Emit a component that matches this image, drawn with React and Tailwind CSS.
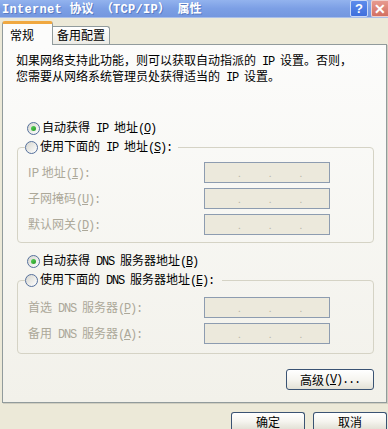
import React from "react";

// SimSun-style half-width latin: 6px per char at 12px
function Lat({ children }) {
    return <span className="font-['Liberation_Mono',monospace] tracking-[-1.2px]">{children}</span>;
}

function Key({ k, colon }) {
    return (
        <Lat>
            (<span className="underline underline-offset-1">{k}</span>){colon ? ":" : ""}
        </Lat>
    );
}

function Radio({ checked }) {
    return (
        <span className="flex h-[13px] w-[13px] shrink-0 items-center justify-center rounded-full border border-[#55709c] bg-gradient-to-br from-[#d6d6cf] to-white">
            {checked && <span className="h-[5px] w-[5px] rounded-full bg-gradient-to-br from-[#5bd15b] to-[#1f9a1f]" />}
        </span>
    );
}

function IpBox() {
    return (
        <div className="flex h-[21px] w-[126px] items-end border border-[#8d9cb0] bg-[#ece9dc] pb-[4px] text-[10px] leading-none text-[#b8b5a8]">
            <span className="ml-[33px]">.</span>
            <span className="ml-[28px]">.</span>
            <span className="ml-[28px]">.</span>
        </div>
    );
}

function Row({ label }) {
    return (
        <div className="flex items-center">
            <span className="w-[176px] text-[#aca899]">{label}</span>
            <IpBox />
        </div>
    );
}

function Btn({ children, className = "" }) {
    return (
        <button className={`flex items-center justify-center rounded-[3px] border border-[#3a5373] bg-gradient-to-b from-white via-[#f6f5f0] to-[#e3e1d6] text-[12px] leading-[14px] text-black ${className}`}>
            {children}
        </button>
    );
}

export default function App() {
    return (
        <div className="h-[429px] w-[388px] overflow-hidden bg-[#ece9d8] font-['Noto_Sans_CJK_SC',sans-serif] text-[12px] leading-[16px] text-black">
            {/* title bar */}
            <div className="flex h-[18px] items-center justify-between bg-gradient-to-b from-[#93b3ee] via-[#7c9fe5] to-[#7497df] border-b border-[#a9bfe9]">
                <div className="pl-[2px] text-[12px] font-bold text-white [text-shadow:1px_1px_0_#5a7cc4]">
                    <span className="font-['Liberation_Mono',monospace] tracking-[0.3px]">Internet </span>协议<span className="font-['Liberation_Mono',monospace] tracking-[0.3px]"> </span>（<span className="font-['Liberation_Mono',monospace] tracking-[0.3px]">TCP/IP</span>）<span className="font-['Liberation_Mono',monospace] tracking-[0.3px]"> </span>属性
                </div>
                <div className="flex h-[17px] items-start gap-[3px] self-start">
                    <div className="flex h-[17px] w-[18px] items-center justify-center rounded-[2px] border border-[#c9d8f5] bg-gradient-to-b from-[#5d8cec] to-[#3f6fdc] font-['Liberation_Sans',sans-serif] text-[13px] font-bold text-white">?</div>
                    <div className="flex h-[17px] w-[17px] items-center justify-center rounded-l-[2px] border border-r-0 border-[#f0d0cc] bg-gradient-to-b from-[#e79a8f] to-[#d26f62] font-['Liberation_Sans',sans-serif] text-[14px] font-bold text-white">✕</div>
                </div>
            </div>

            {/* tabs */}
            <div className="mt-[3px] flex h-[23px] items-end pl-[2px]">
                <div className="relative z-10 -mb-[1px] h-[24px] w-[51px] rounded-t-[3px] border-x border-t-[3px] border-x-[#919b9c] border-t-[#f0a840] bg-[#fcfcfb] pl-[7px] pt-[3px]">
                    常规
                </div>
                <div className="h-[18px] w-[57px] rounded-tr-[3px] border-r border-t border-[#919b9c] bg-gradient-to-b from-white to-[#ecebe5] pl-[4px] leading-[16px]">
                    备用配置
                </div>
            </div>

            {/* panel */}
            <div className="ml-[2px] flex h-[359px] w-[385px] flex-col border border-[#919b9c] bg-gradient-to-b from-[#fcfcfb] to-[#f2f1ea] shadow-[1px_1px_0_#d0cec0]">
                <p className="mt-[8px] pl-[13px] leading-[14px]">
                    如果网络支持此功能，则可以获取自动指派的<Lat> IP </Lat>设置。否则，<br />
                    您需要从网络系统管理员处获得适当的<Lat> IP </Lat>设置。
                </p>

                <div className="ml-[24px] mt-[35px] flex h-[16px] items-center gap-[2px]">
                    <Radio checked />
                    <span>自动获得<Lat> IP </Lat>地址<Key k="O" /></span>
                </div>

                <fieldset className="ml-[14px] mt-[3px] w-[357px] rounded-[4px] border border-[#d5d3c5] pb-[7px]">
                    <legend className="ml-[7px] flex h-[16px] items-center gap-[2px] pr-[6px]">
                        <Radio />
                        <span>使用下面的<Lat> IP </Lat>地址<Key k="S" colon /></span>
                    </legend>
                    <div className="flex flex-col gap-[5px] pl-[10px] pt-[7px]">
                        <Row label={<>IP 地址<Key k="I" colon /></>} />
                        <Row label={<>子网掩码<Key k="U" colon /></>} />
                        <Row label={<>默认网关<Key k="D" colon /></>} />
                    </div>
                </fieldset>

                <div className="ml-[24px] mt-[10px] flex h-[16px] items-center gap-[2px]">
                    <Radio checked />
                    <span>自动获得<Lat> DNS </Lat>服务器地址<Key k="B" /></span>
                </div>

                <fieldset className="ml-[14px] mt-[3px] w-[357px] rounded-[4px] border border-[#d5d3c5] pb-[9px]">
                    <legend className="ml-[7px] flex h-[16px] items-center gap-[2px] pr-[8px]">
                        <Radio />
                        <span>使用下面的<Lat> DNS </Lat>服务器地址<Key k="E" colon /></span>
                    </legend>
                    <div className="flex flex-col gap-[5px] pl-[10px] pt-[9px]">
                        <Row label={<>首选<Lat> DNS </Lat>服务器<Key k="P" colon /></>} />
                        <Row label={<>备用<Lat> DNS </Lat>服务器<Key k="A" colon /></>} />
                    </div>
                </fieldset>

                <div className="mr-[12px] mt-[15px] flex justify-end">
                    <Btn className="h-[21px] w-[88px]">
                        高级<Lat>(<span className="underline underline-offset-1">V</span>)...</Lat>
                    </Btn>
                </div>
            </div>

            {/* dialog buttons, cut by the window's bottom edge */}
            <div className="mt-[9px] flex justify-end gap-[8px] pr-[1px]">
                <Btn className="h-[17px] w-[74px] rounded-b-none border-b-0 pt-[1px]">确定</Btn>
                <Btn className="h-[17px] w-[74px] rounded-b-none border-b-0 pt-[1px]">取消</Btn>
            </div>
        </div>
    );
}
